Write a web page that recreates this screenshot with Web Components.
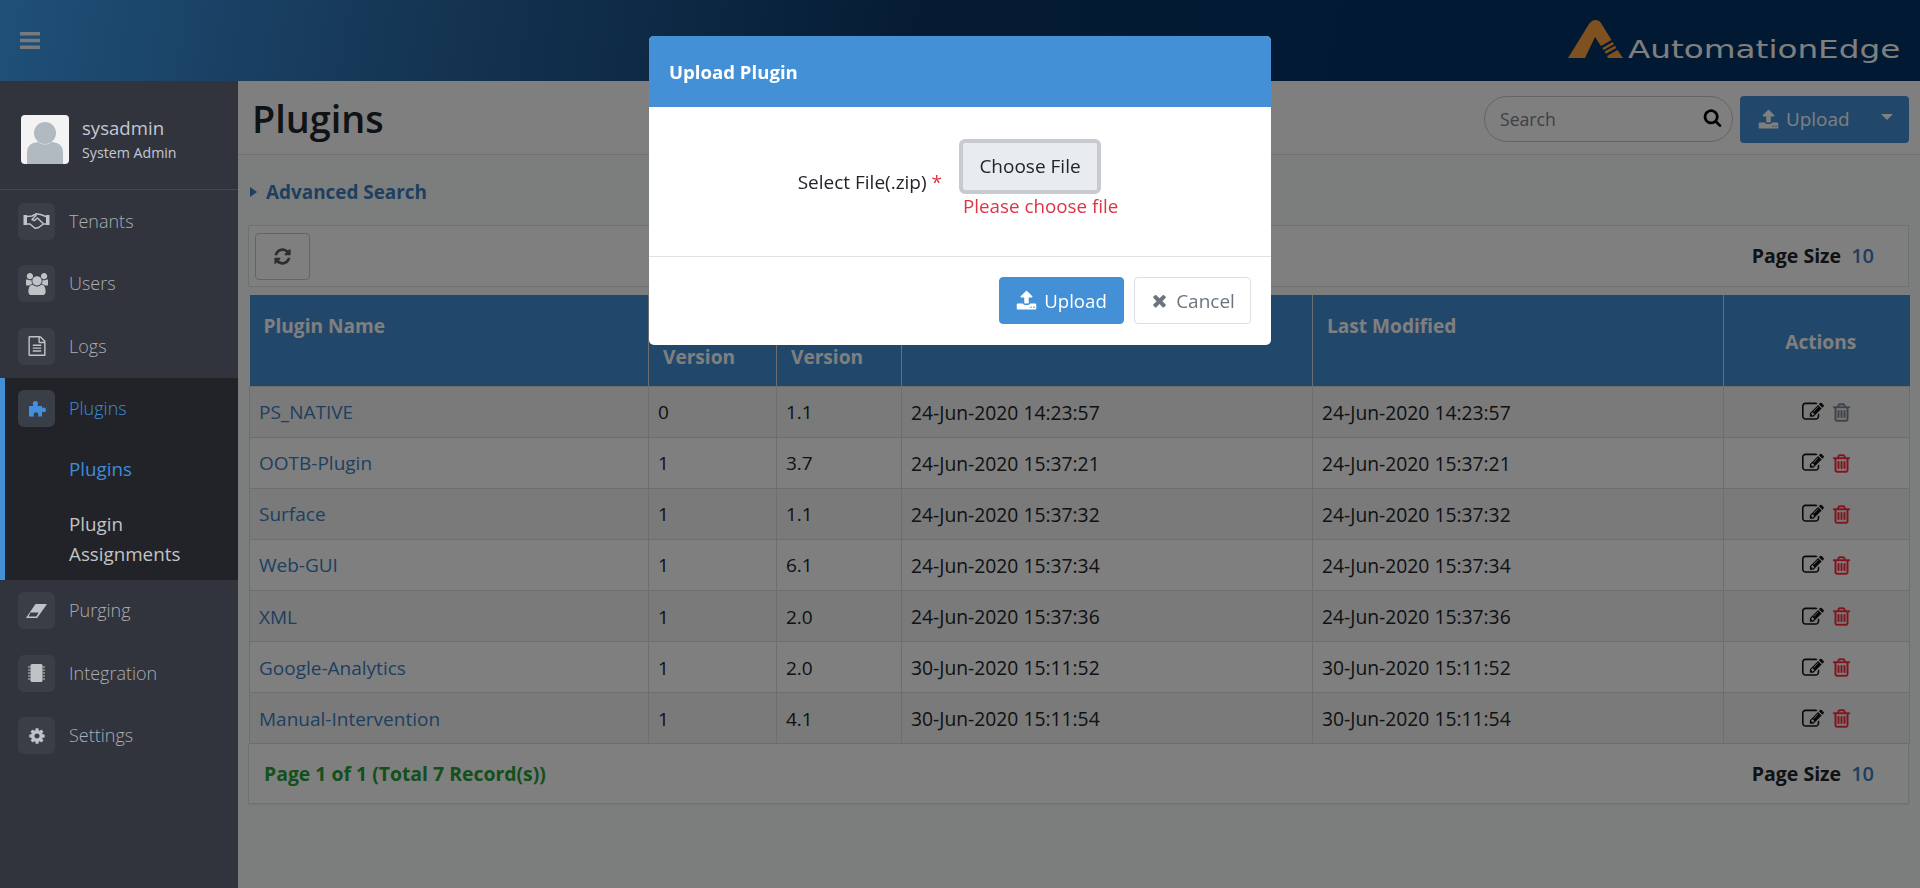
<!DOCTYPE html>
<html lang="en"><head><meta charset="utf-8"><title>Plugins</title>
<style>
html,body{margin:0;height:100%;overflow:hidden}
body{font-family:"Open Sans","Noto Sans",sans-serif;font-size:19px;color:#212529;background:#f9fcfb}
app-shell{height:888px}
</style></head>
<body>
<app-shell>
  <top-bar slot="top"></top-bar>
  <side-nav slot="side"></side-nav>
  <plugins-page slot="main"></plugins-page>
</app-shell>
<modal-backdrop></modal-backdrop>
<upload-modal></upload-modal>
<script>
const P={
upload:'M1344 1472q0-26-19-45t-45-19-45 19-19 45 19 45 45 19 45-19 19-45zm256 0q0-26-19-45t-45-19-45 19-19 45 19 45 45 19 45-19 19-45zm128-224v320q0 40-28 68t-68 28h-1472q-40 0-68-28t-28-68v-320q0-40 28-68t68-28h427q21 56 70.5 92t110.5 36h256q61 0 110.5-36t70.500-92h427q40 0 68 28t28 68zm-325-648q-17 40-59 40h-256v448q0 26-19 45t-45 19h-256q-26 0-45-19t-19-45v-448h-256q-42 0-59-40-17-39 14-69l448-448q18-19 45-19t45 19l448 448q31 30 14 69z',
times:'M1490 1322q0 40-28 68l-136 136q-28 28-68 28t-68-28l-294-294-294 294q-28 28-68 28t-68-28l-136-136q-28-28-28-68t28-68l294-294-294-294q-28-28-28-68t28-68l136-136q28-28 68-28t68 28l294 294 294-294q28-28 68-28t68 28l136 136q28 28 28 68t-28 68l-294 294 294 294q28 28 28 68z',
search:'M1216 832q0-185-131.500-316.500t-316.500-131.500-316.500 131.500-131.500 316.500 131.500 316.500 316.500 131.500 316.500-131.500 131.500-316.500zm512 832q0 52-38 90t-90 38q-54 0-90-38l-343-342q-179 124-399 124-143 0-273.500-55.500t-225-150-150-225-55.500-273.500 55.500-273.500 150-225 225-150 273.500-55.500 273.500 55.500 225 150 150 225 55.500 273.500q0 220-124 399l343 343q37 37 37 90z',
refresh:'M1639 1056q0 5-1 7-64 268-268 434.500t-478 166.500q-146 0-282.500-55t-243.500-157l-129 129q-19 19-45 19t-45-19-19-45v-448q0-26 19-45t45-19h448q26 0 45 19t19 45-19 45l-137 137q71 66 161 102t187 36q134 0 250-65t186-179q11-17 53-117 8-23 30-23h192q13 0 22.500 9.500t9.500 22.500zm25-800v448q0 26-19 45t-45 19h-448q-26 0-45-19t-19-45 19-45l138-138q-148-137-349-137-134 0-250 65t-186 179q-11 17-53 117-8 23-30 23h-199q-13 0-22.500-9.500t-9.500-22.500v-7q65-268 270-434.500t480-166.500q146 0 284 55.500t245 156.500l130-129q19-19 45-19t45 19 19 45z',
trash:'M704 736v576q0 14-9 23t-23 9h-64q-14 0-23-9t-9-23v-576q0-14 9-23t23-9h64q14 0 23 9t9 23zm256 0v576q0 14-9 23t-23 9h-64q-14 0-23-9t-9-23v-576q0-14 9-23t23-9h64q14 0 23 9t9 23zm256 0v576q0 14-9 23t-23 9h-64q-14 0-23-9t-9-23v-576q0-14 9-23t23-9h64q14 0 23 9t9 23zm128 724v-948h-896v948q0 22 7 40.500t14.500 27 10.500 8.500h832q3 0 10.500-8.500t14.500-27 7-40.500zm-672-1076h448l-48-117q-7-9-17-11h-317q-10 2-17 11zm928 32v64q0 14-9 23t-23 9h-96v948q0 83-47 143.500t-113 60.500h-832q-66 0-113-58.500t-47-141.500v-952h-96q-14 0-23-9t-9-23v-64q0-14 9-23t23-9h309l70-167q15-37 54-63t79-26h320q40 0 79 26t54 63l70 167h309q14 0 23 9t9 23z',
edit:'M888 1184l116-116-152-152-116 116v56h96v96h56zm440-720q-16-16-33 1l-350 350q-17 17-1 33t33-1l350-350q17-17 1-33zm80 594v190q0 119-84.500 203.500t-203.500 84.500h-832q-119 0-203.500-84.500t-84.500-203.500v-832q0-119 84.500-203.500t203.500-84.500h832q63 0 117 25 15 7 18 23 3 17-9 29l-49 49q-14 14-32 8-23-6-45-6h-832q-66 0-113 47t-47 113v832q0 66 47 113t113 47h832q66 0 113-47t47-113v-126q0-13 9-22l64-64q15-15 35-7t20 29zm-96-738l288 288-672 672h-288v-288zm444 132l-92 92-288-288 92-92q28-28 68-28t68 28l152 152q28 28 28 68t-28 68z',
file:'M1596 380q28 28 48 76t20 88v1152q0 40-28 68t-68 28h-1344q-40 0-68-28t-28-68v-1600q0-40 28-68t68-28h896q40 0 88 20t76 48zm-444-244v376h376q-10-29-22-41l-313-313q-12-12-41-22zm384 1528v-1024h-416q-40 0-68-28t-28-68v-416h-768v1536h1280zm-1024-864q0-14 9-23t23-9h704q14 0 23 9t9 23v64q0 14-9 23t-23 9h-704q-14 0-23-9t-9-23v-64zm736 224q14 0 23 9t9 23v64q0 14-9 23t-23 9h-704q-14 0-23-9t-9-23v-64q0-14 9-23t23-9h704zm0 256q14 0 23 9t9 23v64q0 14-9 23t-23 9h-704q-14 0-23-9t-9-23v-64q0-14 9-23t23-9h704z',
users:'M529 896q-162 5-265 128h-134q-82 0-138-40.500t-56-118.500q0-353 124-353 6 0 43.500 21t97.500 42.500 119 21.500q67 0 133-23-5 37-5 66 0 139 81 256zm1071 637q0 120-73 189.500t-194 69.500h-874q-121 0-194-69.500t-73-189.500q0-53 3.500-103.500t14-109 26.500-108.500 43-97.500 62-81 85.500-53.500 111.500-20q10 0 43 21.500t73 48 107 48 135 21.500 135-21.500 107-48 73-48 43-21.500q61 0 111.500 20t85.500 53.500 62 81 43 97.500 26.500 108.500 14 109 3.500 103.500zm-1024-1277q0 106-75 181t-181 75-181-75-75-181 75-181 181-75 181 75 75 181zm704 384q0 159-112.500 271.500t-271.500 112.500-271.500-112.500-112.500-271.500 112.500-271.500 271.500-112.500 271.500 112.500 112.500 271.500zm576 225q0 78-56 118.500t-138 40.500h-134q-103-123-265-128 81-117 81-256 0-29-5-66 66 23 133 23 59 0 119-21.500t97.500-42.500 43.500-21q124 0 124 353zm-128-609q0 106-75 181t-181 75-181-75-75-181 75-181 181-75 181 75 75 181z',
cog:'M1152 896q0-106-75-181t-181-75-181 75-75 181 75 181 181 75 181-75 75-181zm512-109v222q0 12-8 23t-20 13l-185 28q-19 54-39 91 35 50 107 138 10 12 10 25t-9 23q-27 37-99 108t-94 71q-12 0-26-9l-138-108q-44 23-91 38-16 136-29 186-7 28-36 28h-222q-14 0-24.500-8.500t-11.500-21.500l-28-184q-49-16-90-37l-141 107q-10 9-25 9-14 0-25-11-126-114-165-168-7-10-7-23 0-12 8-23 15-21 51-66.500t54-70.500q-27-50-41-99l-183-27q-13-2-21-12.500t-8-23.500v-222q0-12 8-23t19-13l186-28q14-46 39-92-40-57-107-138-10-12-10-24 0-10 9-23 26-36 98.500-107.500t94.500-71.500q13 0 26 10l138 107q44-23 91-38 16-136 29-186 7-28 36-28h222q14 0 24.500 8.500t11.500 21.500l28 184q49 16 90 37l142-107q9-9 24-9 13 0 25 10 129 119 165 170 7 8 7 22 0 12-8 23-15 21-51 66.500t-54 70.500q26 50 41 98l183 28q13 2 21 12.500t8 23.500z'
};
const fa=(n,s,c='currentColor',sw=0)=>`<svg width="${s}" height="${s}" viewBox="0 0 1792 1792" style="display:block;flex:none"><path fill="${c}" ${sw?`stroke="${c}" stroke-width="${sw}"`:''} d="${P[n]}"/></svg>`;
const custom={
handshake:`<svg width="27" height="18" viewBox="0 0 26 18" style="display:block"><path fill="currentColor" d="M0 3h3.500v10H0zM22.500 3H26v10h-3.500z"/><path fill="none" stroke="currentColor" stroke-width="1.500" stroke-linejoin="round" stroke-linecap="round" d="M3.500 4.500 8.500 4 12.500 1.800 17 2.500 22.500 4.500M3.500 12 6.500 12 11.500 16.300 14.500 15.800 20 12 22.500 12M19.800 11.800 14 6 10.800 8.600 8.500 7.500 12.500 3.500"/></svg>`,
puzzle:`<svg width="18" height="18" viewBox="0 0 18 18" style="display:block"><path fill="currentColor" d="M1 6H5.500C5 5 4.800 4.500 4.800 3.500A2.600 2.600 0 0 1 10 3.500C10 4.500 9.800 5 9.300 6H14V8.200C14.500 7.800 15 7.600 15.700 7.600A2.300 2.300 0 0 1 15.700 12.200C15 12.200 14.500 12 14 11.600V16.500H9.800C10.200 15.800 10.400 15.300 10.400 14.600A2.400 2.400 0 0 0 5.600 14.600C5.600 15.300 5.800 15.800 6.200 16.500H1Z"/></svg>`,
eraser:`<svg width="21" height="14" viewBox="0 0 21 14" style="display:block"><path fill="currentColor" fill-rule="evenodd" d="M9.500 0H20.500Q21 0 20.700 .5L11.500 13.500Q11.200 14 10.500 14H.5Q0 14 .3 13.500ZM4.500 8.500 2.600 12.500H10.500L12.500 8.500Z"/></svg>`,
chip:`<svg width="17" height="18" viewBox="0 0 17 18" style="display:block"><rect x="2.500" y="0" width="12" height="18" rx="1.500" fill="currentColor"/><path stroke="currentColor" stroke-width="1.200" d="M0 3h2.500M14.500 3H17M0 6h2.500M14.500 6H17M0 9h2.500M14.500 9H17M0 12h2.500M14.500 12H17M0 15h2.500M14.500 15H17"/></svg>`
};
function def(name,css,html){
  customElements.define(name,class extends HTMLElement{
    connectedCallback(){
      if(this.shadowRoot)return;
      const r=this.attachShadow({mode:'open'});
      r.innerHTML=`<style>${css}</style>`+html;
    }
  });
}
def('app-shell',`:host{display:grid;grid-template:81px 1fr/238px minmax(0,1fr);width:1920px}
 .t{grid-column:1/3;display:block}`,
 `<slot name="top" class="t"></slot><slot name="side"></slot><slot name="main"></slot>`);
def('top-bar',`:host{display:flex;height:81px;align-items:center;justify-content:space-between;padding:0 18px 0 20px;box-sizing:border-box;background:linear-gradient(100deg,#3f9ff0 0,#2a6ba8 22%,#0a3766 48%,#023366 75%,#023366 100%);color:#fff;box-shadow:0 2px 4px rgba(0,0,0,.5)}
 svg{display:block}
 .logo{display:flex;align-items:flex-end;align-self:flex-start;margin-top:20px;gap:5px;height:38px}
 .word{font:400 24px/1 "DejaVu Sans",sans-serif;color:#fff;display:block;transform-origin:left bottom;transform:scaleX(1.360);width:274px;margin-bottom:-4px;white-space:nowrap}`,
 `<svg width="20" height="17" viewBox="0 0 20 17"><path fill="#ffffff" fill-opacity=".9" d="M0 0h20v3.400H0zM0 6.800h20v3.400H0zM0 13.600h20V17H0z"/></svg>
 <div class="logo"><svg width="55" height="38" viewBox="0 0 55 38"><path fill="#ffa040" d="M0 38 21 4Q24 0 27.500 0 31 0 33 3L43.500 20 33 26 27 17 17 38ZM34.300 28 44.700 22 46 24.200 35.600 30ZM36.500 31.500 47 25.800 48.300 28 38 33.700ZM39 36 49.500 30 55 38H40Z"/></svg><span class="word">AutomationEdge</span></div>`);
def('side-nav',`:host{display:block;position:relative;z-index:1050;background:#31343c;color:#a9adb5;height:807px}
 .user{height:109px;box-sizing:border-box;display:flex;align-items:center;gap:13px;padding:9px 0 0 21px;border-bottom:1px solid #434855}
 .av{width:48px;height:49px;border-radius:4px;background:#f3f3f3;overflow:hidden;flex:none}
 .n{font-size:18.600px;line-height:27px;color:#c3c8d4}.r{font-size:14.200px;line-height:24px;color:#c3c8d4}
 .act{background:#212328;border-left:5px solid #4390d6;height:202px;box-sizing:border-box}
 .sub{display:block;color:#c4c4c4;padding-left:64px;font-size:18.800px;line-height:30px}
 .sub.on{color:#3f8bd9;margin-top:14px}.sub.two{margin-top:25px}`,
 `<div class="user"><div class="av"><svg width="48" height="49" viewBox="0 0 48 49" style="display:block"><circle cx="24" cy="18" r="11" fill="#b1b9c1"/><path fill="#b1b9c1" d="M6 49V37Q6 28 17 27 24 32 31 27 42 28 42 37V49Z"/></svg></div><div><div class="n">sysadmin</div><div class="r">System Admin</div></div></div>
 <nav-item icon="handshake" label="Tenants"></nav-item>
 <nav-item icon="users" label="Users"></nav-item>
 <nav-item icon="file" label="Logs"></nav-item>
 <div class="act"><nav-item icon="puzzle" label="Plugins" on></nav-item>
  <span class="sub on">Plugins</span><span class="sub two">Plugin<br>Assignments</span></div>
 <nav-item icon="eraser" label="Purging"></nav-item>
 <nav-item icon="chip" label="Integration"></nav-item>
 <nav-item icon="cog" label="Settings"></nav-item>`);
customElements.define('nav-item',class extends HTMLElement{
 connectedCallback(){ if(this.shadowRoot)return;
  const r=this.attachShadow({mode:'open'});
  const on=this.hasAttribute('on'),ic=this.getAttribute('icon');
  const g=P[ic]?fa(ic,ic==='cog'?18:ic==='users'?22:20):custom[ic];
  r.innerHTML=`<style>:host{display:flex;align-items:center;height:62.500px;gap:14px;padding-left:${on?13:18}px;font-size:18px;font-weight:300;color:${on?'#3f8bd9':'#a9adb5'};${on?'height:62px;':''}}
  span{margin-bottom:1px}
  .b{width:37px;height:37px;border-radius:6px;background:#3a3e47;display:flex;align-items:center;justify-content:center;color:${on?'#4390e0':'#bfc2c6'}}</style><div class="b">${g}</div><span>${this.getAttribute('label')}</span>`;
 }});
def('plugins-page',`:host{display:block;height:807px;padding:0 11px 0 10px;box-sizing:border-box}
 .head{display:flex;align-items:center;height:74px;margin:0 -11px 0 -10px;padding:3px 11px 0 14px;box-sizing:border-box;background:#fcfefd;border-bottom:1px solid #dfe3e2;gap:7px}
 h1{font-size:37.800px;font-weight:600;margin:0;flex:1;color:#212529;line-height:1}
 .search{width:249px;height:46px;box-sizing:border-box;border:1px solid #c6c9cb;border-radius:23px;display:flex;align-items:center;justify-content:space-between;padding:0 10px 4px 15px;background:#fff;color:#7b8288;font-size:17.600px}
 .search span{margin-top:4px}
 .up{width:169px;height:47px;box-sizing:border-box;border-radius:4px;background:#4390d6;color:#fff;display:flex;align-items:center;padding:0 16px 0 18px;font-size:18.900px;gap:7px}
 .caret{margin-left:auto;width:0;height:0;border:6px solid transparent;border-top:6px solid #fff;border-bottom:0;margin-bottom:4px}
 .adv{height:70px;box-sizing:border-box;padding:3px 0 0 2px;display:flex;align-items:center;gap:9px;font-size:18.900px;font-weight:700;color:#3d7fc1}
 .tri{width:0;height:0;border:5.500px solid transparent;border-left:7px solid #3d7fc1;border-right:0}
 .card{border:1px solid #dfe1e1;background:#fff;display:flex;align-items:center;justify-content:space-between;box-sizing:border-box;padding:0 34px 0 6px}
 .tool{height:62px}
 .tool .ps{margin-bottom:2px}
 .ref{width:55px;height:47px;box-sizing:border-box;border:1px solid #c8c8c8;border-radius:4px;display:flex;align-items:center;justify-content:center;color:#5a5a5a}
 .ps{font-weight:700;font-size:19.500px;display:flex;align-items:baseline;gap:10px;color:#212529}
 .ps b{color:#3d7fc1;font-size:20px;font-weight:600}
 .foot{height:60px;padding-left:15px;border-top:0;box-shadow:0 1px 2px rgba(0,0,0,.06)}
 .rec{font-weight:700;color:#28a038;font-size:19.400px}`,
 `<div class="head"><h1>Plugins</h1><div class="search"><span>Search</span>${fa('search',19,'#000')}</div><div class="up">${fa('upload',21)}<span>Upload</span><i class="caret"></i></div></div>
 <div class="adv"><i class="tri"></i><span>Advanced Search</span></div>
 <div class="card tool"><div class="ref">${fa('refresh',19)}</div><div class="ps">Page Size <b>10</b></div></div>
 <plugin-table></plugin-table>
 <div class="card foot"><span class="rec">Page 1 of 1 (Total 7 Record(s))</span><div class="ps">Page Size <b>10</b></div></div>`);
const rows=[['PS_NATIVE','0','1.1','24-Jun-2020 14:23:57',1],['OOTB-Plugin','1','3.7','24-Jun-2020 15:37:21'],['Surface','1','1.1','24-Jun-2020 15:37:32'],['Web-GUI','1','6.1','24-Jun-2020 15:37:34'],['XML','1','2.0','24-Jun-2020 15:37:36'],['Google-Analytics','1','2.0','30-Jun-2020 15:11:52'],['Manual-Intervention','1','4.1','30-Jun-2020 15:11:54']];
customElements.define('plugin-table',class extends HTMLElement{
 connectedCallback(){ if(this.shadowRoot)return;
  const r=this.attachShadow({mode:'open'});
  r.innerHTML=`<style>:host{display:block;margin-top:8px}
  table{border-collapse:collapse;table-layout:fixed;width:1660px;margin-left:1px}
  th{background:#4390d6;color:#fff;font-size:19.100px;font-weight:700;text-align:left;height:91px;padding:0 14px;box-sizing:border-box;border-left:1px solid #d8dde0;border-right:1px solid #d8dde0}
  th:first-child{border-left:0}th:last-child{border-right:0}
  th.tp{vertical-align:top;padding-top:18px;line-height:26px}
  th.bt{vertical-align:bottom;padding-bottom:16px;line-height:26px}
  th.c{text-align:center;padding:3px 15px 0 23px}
  td{height:51.140px;padding:1px 10px 0 9px;box-sizing:border-box;font-size:19px;border:1px solid #dcdcdc;color:#212529}
  td.d{font-size:19.300px}
  tr:nth-child(odd) td{background:#f4f4f4}tr:nth-child(even) td{background:#fff}
  a{color:#3d7fc1;text-decoration:none}
  .acts{display:flex;justify-content:center;gap:7px;align-items:center;padding-left:21px}</style>
  <table><colgroup><col style="width:399px"><col style="width:128px"><col style="width:125px"><col style="width:411px"><col style="width:411px"><col style="width:186px"></colgroup>
  <thead><tr><th class="tp">Plugin Name</th><th class="bt">Version</th><th class="bt">Version</th><th></th><th class="tp">Last Modified</th><th class="c">Actions</th></tr></thead>
  <tbody>${rows.map(x=>`<tr><td><a>${x[0]}</a></td><td>${x[1]}</td><td>${x[2]}</td><td class="d">${x[3]}</td><td class="d">${x[3]}</td><td><div class="acts">${fa('edit',22,'#111')}${fa('trash',21,x[4]?'#7d8790':'#ff2a3c',35)}</div></td></tr>`).join('')}</tbody></table>`;
 }});
def('modal-backdrop',`:host{position:fixed;inset:0;background:rgba(0,0,0,.5);z-index:1040;display:block}`,``);
def('upload-modal',`:host{position:fixed;left:649px;top:36px;width:622px;height:309px;z-index:1060;display:block;background:#fff;border-radius:5px;overflow:hidden;color:#212529;font-size:19px}
 .h{height:71px;background:#4390d6;color:#fff;font-weight:700;font-size:18.600px;display:flex;align-items:center;padding:0 0 0 20px;box-sizing:border-box}
 .b{height:150px;border-bottom:1px solid #dee2e6;box-sizing:border-box;display:flex;align-items:center;padding:0 0 7px 0}
 .l{width:293px;text-align:right;padding-top:8px;white-space:nowrap}
 .l i{color:#dc3545;font-style:normal}
 .ctl{margin-left:17px;display:flex;flex-direction:column;align-items:flex-start}
 button{font:inherit}
 .file{width:142px;height:55px;box-sizing:border-box;border:4px solid #c7cbd0;border-radius:6px;background:#e9ecef;color:#212529;padding:0;margin:0}
 .e{color:#dc3545;line-height:24px;margin-left:4px;font-size:18.800px}
 .f{display:flex;justify-content:flex-end;gap:10px;padding:20px 20px 0 0}
 .btn{height:47px;box-sizing:border-box;border-radius:4px;display:flex;align-items:center;justify-content:center;gap:7px;font-size:18.600px;border:1px solid #4390d6;background:#4390d6;color:#fff;padding:0}
 .p{width:125px}.c{width:117px;background:#fff;color:#6c757d;border-color:#dcdfe2;font-size:19px}`,
 `<div class="h">Upload Plugin</div>
 <div class="b"><div class="l">Select File(.zip) <i>*</i></div><div class="ctl"><button class="file">Choose File</button><div class="e">Please choose file</div></div></div>
 <div class="f"><button class="btn p">${fa('upload',21)}Upload</button><button class="btn c">${fa('times',19)}Cancel</button></div>`);
</script>
</body></html>
